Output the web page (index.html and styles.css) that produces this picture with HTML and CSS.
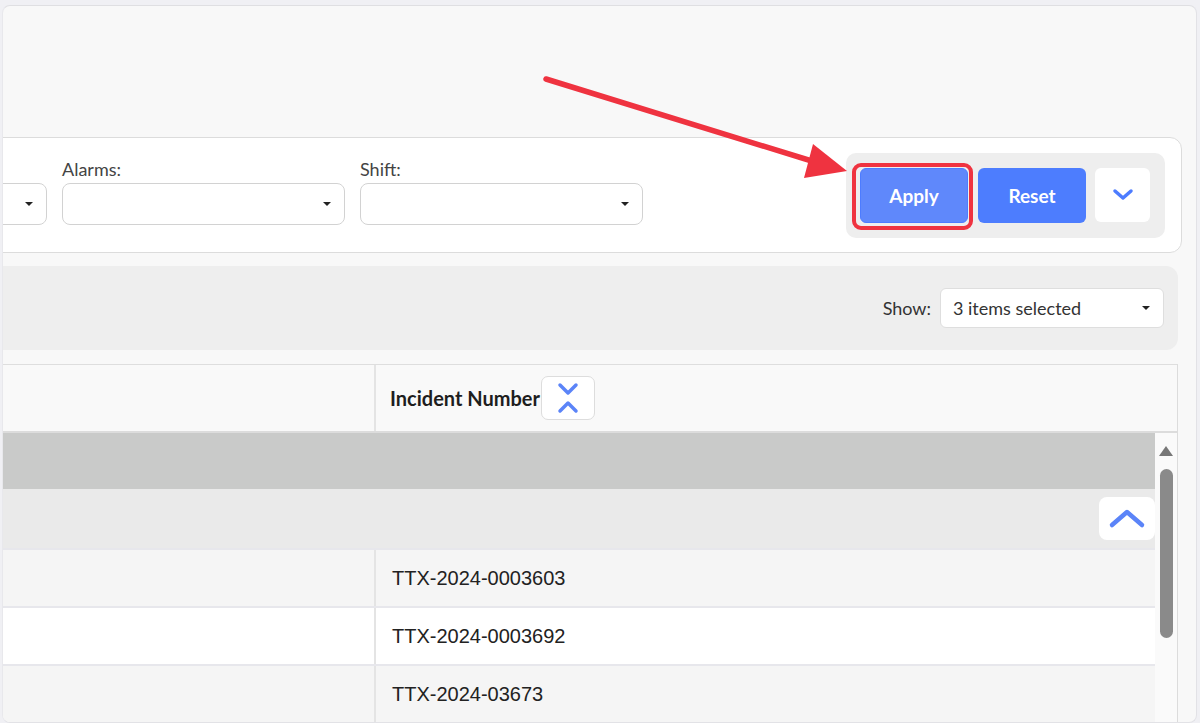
FILE: index.html
```html
<!DOCTYPE html>
<html lang="en">
<head>
    <meta charset="UTF-8">
    <meta name="viewport" content="width=device-width, initial-scale=1.0">
    <title>Incidents</title>
    <link rel="stylesheet" href="styles.css">
</head>
<body>

    <div class="frame">
        <section class="filters">
            <div class="field">
                <label>&nbsp;</label>
                <div class="select"><span class="caret"></span></div>
            </div>
            <div class="field">
                <label>Alarms:</label>
                <div class="select"><span class="caret"></span></div>
            </div>
            <div class="field">
                <label>Shift:</label>
                <div class="select"><span class="caret"></span></div>
            </div>
            <div class="actions">
                <button class="btn btn-apply">Apply</button>
                <button class="btn btn-reset">Reset</button>
                <button class="btn btn-toggle">
                    <svg width="22" height="13" viewBox="0 0 22 13"><path d="M3 3 L11 10 L19 3" fill="none" stroke="#4d7cff" stroke-width="3.5" stroke-linecap="round" stroke-linejoin="round"/></svg>
                </button>
            </div>
        </section>

        <section class="toolbar">
            <span class="show-label">Show:</span>
            <div class="select select-show">
                <span>3 items selected</span>
                <span class="caret"></span>
            </div>
        </section>

        <section class="grid">
            <div class="grid-head">
                <div class="cell cell-first"></div>
                <div class="cell cell-main">
                    <span class="head-title">Incident Number</span>
                    <button class="sort-btn">
                        <svg width="22" height="34" viewBox="0 0 22 34"><path d="M3 4 L11 12 L19 4 M3 30 L11 22 L19 30" fill="none" stroke="#5b84f8" stroke-width="3.5" stroke-linecap="round" stroke-linejoin="round"/></svg>
                    </button>
                </div>
            </div>
            <div class="grid-body">
                <div class="rows">
                    <div class="group-row level-1"></div>
                    <div class="group-row level-2">
                        <button class="collapse-btn">
                            <svg width="38" height="20" viewBox="0 0 38 20"><path d="M4 16 L19 3 L34 16" fill="none" stroke="#5b84f8" stroke-width="4.5" stroke-linecap="round" stroke-linejoin="round"/></svg>
                        </button>
                    </div>
                    <div class="row odd">
                        <div class="cell cell-first"></div>
                        <div class="cell cell-main">TTX-2024-0003603</div>
                    </div>
                    <div class="row">
                        <div class="cell cell-first"></div>
                        <div class="cell cell-main">TTX-2024-0003692</div>
                    </div>
                    <div class="row odd">
                        <div class="cell cell-first"></div>
                        <div class="cell cell-main">TTX-2024-03673</div>
                    </div>
                </div>
                <div class="scrollbar">
                    <span class="scroll-up"></span>
                    <span class="scroll-thumb"></span>
                </div>
            </div>
        </section>
    </div>

    <!-- pointer drawn over the page -->
    <svg class="pointer" width="1200" height="723" viewBox="0 0 1200 723">
        <line x1="546" y1="79" x2="815" y2="162" stroke="#ef3340" stroke-width="5.5" stroke-linecap="round"/>
        <polygon points="847,171 813,144 804,178" fill="#ef3340"/>
    </svg>

</body>
</html>
```

FILE: styles.css
```css
body {
    margin: 0;
    height: 723px;
    overflow: hidden;
    background: #f0f0f4;
    font-family: Lato, "Noto Sans", sans-serif;
    color: #333;
}
.frame {
    position: relative;
    box-sizing: border-box;
    height: 718px;
    margin: 5px 3px 0 2px;
    padding-top: 131px;
    background: #f8f8f8;
    border-top: 1px solid #dfdfe2;
    border-left: 1px solid #e8e8ec;
    border-right: 1px solid #e2e2e6;
    border-bottom: 1px solid #e2e2e6;
    border-radius: 8px;
    overflow: hidden;
}

/* filter panel */
.filters {
    box-sizing: border-box;
    height: 116px;
    margin: 0 14px 0 -400px;
    padding: 0 16px 0 160px;
    display: flex;
    align-items: flex-start;
    gap: 15px;
    background: #fff;
    border: 1px solid #dcdcdc;
    border-radius: 12px;
}
.field {
    margin-top: 21px;
}
.field label {
    display: block;
    font-size: 18px;
    line-height: 20px;
    color: #444;
    margin-bottom: 4px;
}
.select {
    position: relative;
    box-sizing: border-box;
    width: 283px;
    height: 42px;
    background: #fff;
    border: 1px solid #d2d2d2;
    border-radius: 8px;
}
.caret {
    position: absolute;
    right: 13px;
    top: 50%;
    margin-top: -2px;
    width: 0;
    height: 0;
    border-left: 4px solid transparent;
    border-right: 4px solid transparent;
    border-top: 4px solid #222;
}
.actions {
    align-self: center;
    margin-left: auto;
    display: flex;
    padding: 15px 15px 15px 14px;
    background: #eeeeee;
    border-radius: 10px;
}
.btn {
    box-sizing: border-box;
    height: 55px;
    width: 108px;
    border: none;
    border-radius: 6px;
    font-family: Lato, "Noto Sans", sans-serif;
    font-size: 19px;
    font-weight: 700;
    color: #fff;
    padding: 0;
}
.btn-apply {
    position: relative;
    background: #5f88fb;
    border: 1px solid #4d7cff;
}
.btn-apply::after {
    content: "";
    position: absolute;
    left: -9px;
    top: -6px;
    right: -6px;
    bottom: -8px;
    border: 4px solid #ef3340;
    border-radius: 9px;
}
.btn-reset {
    margin-left: 10px;
    background: #4d7dfe;
}
.btn-toggle {
    margin-left: 9px;
    width: 55px;
    height: 54px;
    background: #fff;
    display: flex;
    align-items: center;
    justify-content: center;
}

/* toolbar */
.toolbar {
    box-sizing: border-box;
    height: 84px;
    margin: 13px 18px 0 -400px;
    padding-right: 14px;
    display: flex;
    align-items: center;
    justify-content: flex-end;
    background: #eeeeee;
    border-radius: 12px;
}
.show-label {
    font-size: 18px;
    color: #333;
    margin-right: 9px;
}
.select-show {
    width: 224px;
    height: 40px;
    border-color: #dedede;
    border-radius: 6px;
    display: flex;
    align-items: center;
    padding-left: 12px;
    font-size: 18px;
    color: #333;
}

/* table */
.grid {
    margin: 14px 18px 0 -400px;
    border-top: 1px solid #dedede;
    border-right: 1px solid #dcdcdc;
}
.grid-head {
    display: flex;
    height: 66px;
    background: #f9f9f9;
    border-bottom: 2px solid #dcdcdc;
}
.cell-first {
    box-sizing: border-box;
    width: 773px;
    flex: none;
    border-right: 2px solid #e4e4e4;
}
.cell-main {
    flex: 1;
    display: flex;
    align-items: center;
    padding-left: 14px;
}
.head-title {
    font-size: 20px;
    font-weight: 700;
    color: #1e1e1e;
}
.sort-btn {
    box-sizing: border-box;
    width: 54px;
    height: 44px;
    margin-left: 1px;
    padding: 0;
    background: #fff;
    border: 1px solid #dddddd;
    border-radius: 7px;
    display: flex;
    align-items: center;
    justify-content: center;
}
.grid-body {
    display: flex;
}
.rows {
    flex: 1;
}
.group-row.level-1 {
    height: 56px;
    background: #c9cac9;
}
.group-row.level-2 {
    height: 59px;
    background: #eaeaea;
    display: flex;
    align-items: center;
    justify-content: flex-end;
}
.collapse-btn {
    width: 56px;
    height: 43px;
    padding: 0;
    border: none;
    border-radius: 8px;
    background: #fff;
    display: flex;
    align-items: center;
    justify-content: center;
}
.row {
    display: flex;
    height: 56px;
    background: #fff;
    border-top: 2px solid #e7e7ec;
}
.row.odd {
    background: #f5f5f5;
}
.row .cell-main {
    padding-left: 16px;
    font-family: "Liberation Sans", Arial, sans-serif;
    font-size: 20px;
    color: #222;
}
.scrollbar {
    width: 22px;
    height: 300px;
    background: #fafafa;
    display: flex;
    flex-direction: column;
    align-items: center;
}
.scroll-up {
    margin-top: 13px;
    width: 0;
    height: 0;
    border-left: 7px solid transparent;
    border-right: 7px solid transparent;
    border-bottom: 10px solid #777;
}
.scroll-thumb {
    margin-top: 13px;
    width: 13px;
    height: 169px;
    border-radius: 7px;
    background: #8a8a8a;
}

.pointer {
    position: absolute;
    left: 0;
    top: 0;
    pointer-events: none;
}
```
